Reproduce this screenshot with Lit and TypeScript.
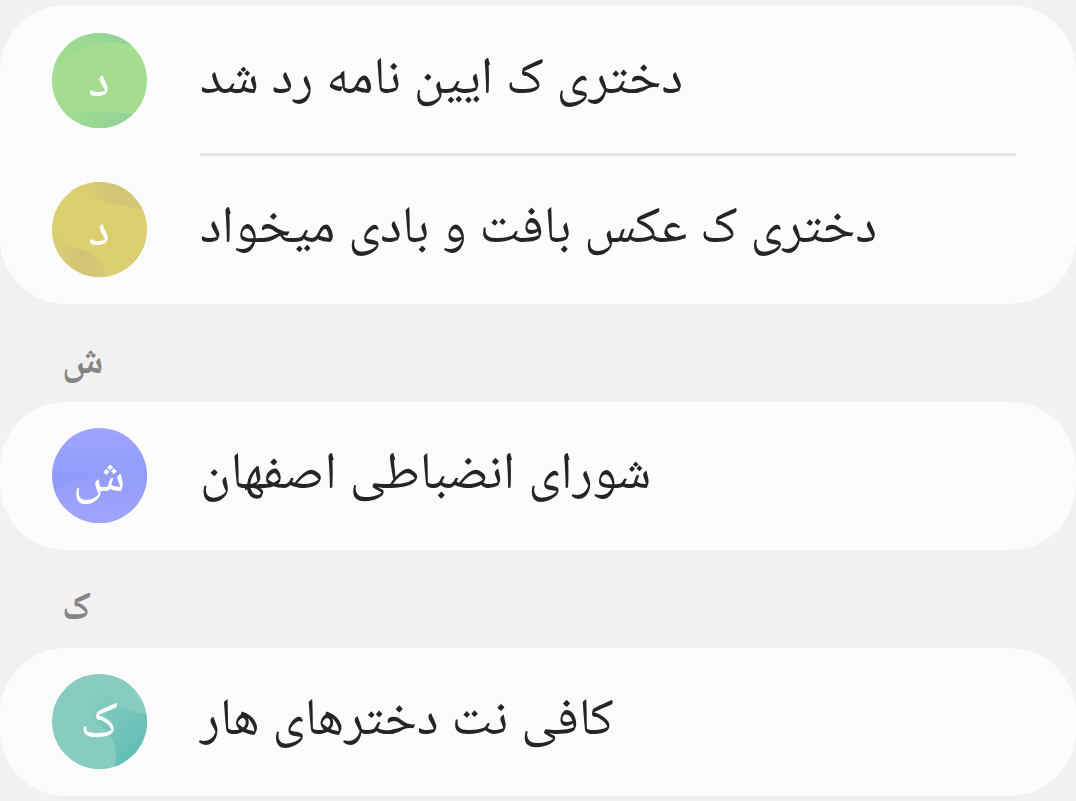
import { LitElement, html, css, svg, type TemplateResult } from "lit";
import { customElement } from "lit/decorators.js";
import { classMap } from "lit/directives/class-map.js";

interface Contact { name: string; initial: string; art: TemplateResult; }
interface Section { letter?: string; contacts: Contact[]; }

const green = svg`
  <defs><linearGradient id="g" x1="0" x2="1"><stop offset="0" stop-color="#a0db90"/><stop offset="0.5" stop-color="#98d794"/><stop offset="1" stop-color="#8fd09a"/></linearGradient></defs>
  <rect width="95" height="95" fill="#a4dd90"/>
  <path d="M0 0H95V20L78 12Q62 7 46 10Q20 16 3 34L0 38Z" fill="url(#g)"/>
  <path d="M12 80Q45 77 84 81V95H12Z" fill="url(#g)"/>`;

const yellow = svg`
  <defs><linearGradient id="g" x1="0" x2="1"><stop offset="0" stop-color="#dacd72"/><stop offset="0.55" stop-color="#d0c577"/><stop offset="1" stop-color="#d6ca75"/></linearGradient></defs>
  <rect width="95" height="95" fill="#dccf70"/>
  <path d="M34 0Q40 18 54 21C66 24 76 22 95 31V0Z" fill="url(#g)"/>
  <path d="M0 48Q10 60 22 65C38 69 52 76 56 95H0Z" fill="url(#g)"/>`;

const violet = svg`
  <defs>
    <linearGradient id="g" x1="0" x2="0" y1="0" y2="1"><stop offset="0" stop-color="#9da5fd"/><stop offset="0.6" stop-color="#909afa"/></linearGradient>
    <linearGradient id="h" x1="0" x2="0" y1="0" y2="1"><stop offset="0" stop-color="#939cfa"/><stop offset="1" stop-color="#a0a6fd"/></linearGradient>
  </defs>
  <rect width="95" height="95" fill="url(#g)"/>
  <path d="M0 62Q36 44 95 44V95H0Z" fill="url(#h)"/>`;

const teal = svg`
  <defs><linearGradient id="g" gradientUnits="userSpaceOnUse" x1="40" y1="22" x2="90" y2="78"><stop offset="0" stop-color="#88ccbf"/><stop offset="1" stop-color="#62beb7"/></linearGradient></defs>
  <rect width="95" height="95" fill="#88ccbf"/>
  <path d="M32 0Q45 16 64 29Q78 38 95 40V95H62Q69 66 49 52Q28 36 30 0Z" fill="url(#g)"/>`;

const sections: Section[] = [
  { contacts: [
    { name: "دختری ک ایین نامه رد شد", initial: "د", art: green },
    { name: "دختری ک عکس بافت و بادی میخواد", initial: "د", art: yellow },
  ] },
  { letter: "ش", contacts: [{ name: "شورای انضباطی اصفهان", initial: "ش", art: violet }] },
  { letter: "ک", contacts: [{ name: "کافی نت دخترهای هار", initial: "ک", art: teal }] },
];

@customElement("contact-avatar")
export class ContactAvatar extends LitElement {
  static properties = { contact: { attribute: false } };
  declare contact: Contact;
  static styles = css`
    :host { display: block; flex: none; width: 95px; height: 95px; }
    .art { display: block; width: 100%; height: 100%; border-radius: 50%; overflow: hidden; }
    .initial { fill: #fff; font-size: 52px; text-anchor: middle; }
  `;
  render() {
    return html`<svg class="art" viewBox="0 0 95 95" aria-hidden="true">
      ${this.contact.art}<text class="initial" x="47" y="70">${this.contact.initial}</text>
    </svg>`;
  }
}

@customElement("app-root")
export class AppRoot extends LitElement {
  static styles = css`
    :host { display: block; box-sizing: border-box; min-height: 100vh; padding: 5px 0; background: #f1f1f1; color: #252525; font-family: Roboto, "Noto Naskh Arabic UI", "Noto Naskh Arabic", "Noto Sans Arabic", "DejaVu Sans", sans-serif; }
    .card { list-style: none; margin: 0; padding: 0; background: #fcfcfc; border-radius: 66px; }
    .continued { padding-top: 2px; }
    .row { position: relative; display: flex; align-items: center; gap: 53px; padding: 26px 60px 27px 52px; }
    .row + .row { margin-top: 1px; }
    .row + .row::before { content: ""; position: absolute; top: -3px; left: 200px; right: 60px; height: 3px; background: #e6e6e6; }
    .name { font-size: 52px; line-height: 60px; padding-top: 4px; direction: rtl; }
    .heading { margin: 0; padding: 24px 62px 0; line-height: 74px; font-size: 39px; font-weight: 700; color: #858585; }
  `;
  render() {
    return html`<main>${sections.map((s) => html`
      ${s.letter ? html`<h2 class="heading">${s.letter}</h2>` : ""}
      <ul class=${classMap({ card: true, continued: !s.letter })}>
        ${s.contacts.map((c) => html`<li class="row">
          <contact-avatar .contact=${c}></contact-avatar>
          <span class="name">${c.name}</span>
        </li>`)}
      </ul>`)}</main>`;
  }
}
